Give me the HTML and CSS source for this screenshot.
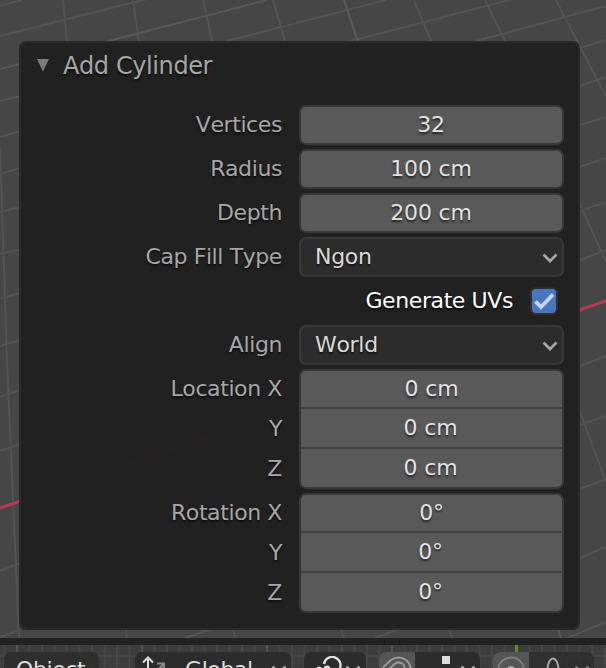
FILE: index.html
```html
<!DOCTYPE html>
<html lang="en">
<head>
<meta charset="utf-8">
<title>Add Cylinder</title>
<link rel="stylesheet" href="styles.css">
</head>
<body>
<div class="screen">
  <svg class="viewport-grid" width="606" height="668" viewBox="0 0 606 668">
    <rect width="606" height="638" fill="#464646"/>
    <g fill="none" stroke="#535353" stroke-width="2">
      <path d="M0 6 22 0M0 36 147-1M227 41 386 0M351 41 509 0M476 41 606 6"/>
      <path d="M0 101 20 96M0 137 20 131M0 174 20 168M0 212 20 207M0 254 20 249M0 299 20 293M0 346 20 340M0 397 20 390M0 451 20 444M0 571 20 563M0 637 20 630"/>
      <path d="M580 48 606 40M580 86 606 77M580 125 606 117M580 167 606 158M580 211 606 202M580 260 606 250M580 366 606 356M580 425 606 416M580 489 606 479M580 558 606 547M567 638 606 622M185 638 212 629M375 638 399 629"/>
      <path d="M63 0 67 41M133 0 139 41M203 0 212 41M273 0 285 41M414 0 431 41M485 0 505 41M556 0 606 97M580 204 606 262M580 412 606 482"/>
      <path d="M0 149 7 360 19 638M126 629 127 638M233 629 235 638M341 629 344 638M449 629 452 638"/>
    </g>
    <path d="M0 69 267 0M344 0 450 318 561 638" fill="none" stroke="#595959" stroke-width="2"/>
    <path d="M0 508 606 301" stroke="#b93a50" stroke-width="3"/>
    <rect y="638" width="606" height="7" fill="#222"/>
    <rect y="645" width="606" height="23" fill="#3d3d3d"/>
    <path d="M4.5 645v23M29.5 645v23M42 645v23M54.5 645v23M67 645v23M79.5 645v23M92 645v23M104.5 645v23M117 645v23M129.5 645v23M154.5 645v23M167 645v23M179.5 645v23M192 645v23M204.5 645v23M217 645v23M229.5 645v23M242 645v23M254.5 645v23M279.5 645v23M292 645v23M304.5 645v23M317 645v23M329.5 645v23M342 645v23M354.5 645v23M367 645v23M379.5 645v23M404.5 645v23M417 645v23M429.5 645v23M442 645v23M454.5 645v23M467 645v23M479.5 645v23M492 645v23M504.5 645v23M529.5 645v23M542 645v23M554.5 645v23M567 645v23M579.5 645v23M592 645v23M604.5 645v23M0 656h606" stroke="#464646" stroke-width="2"/>
    <path d="M17 645v23M142 645v23M267 645v23M392 645v23" stroke="#525252" stroke-width="2"/>
    <path d="M516.5 645v23" stroke="#5b9510" stroke-width="3"/>
  </svg>

  <section class="panel">
    <header class="panel-header">
      <svg width="12" height="13" viewBox="0 0 12 13"><path d="M0 0H12L6 12.5Z" fill="#7c7c7c"/></svg>
      <h1 class="title">Add Cylinder</h1>
    </header>
    <div class="row"><span class="label">Vertices</span><div class="field">32</div></div>
    <div class="row"><span class="label">Radius</span><div class="field">100 cm</div></div>
    <div class="row"><span class="label">Depth</span><div class="field">200 cm</div></div>
    <div class="row"><span class="label">Cap Fill Type</span><div class="field select"><span>Ngon</span><svg width="16" height="10" viewBox="0 0 16 10"><path d="M1.5 1.5 8 8 14.5 1.5"/></svg></div></div>
    <div class="row check-row"><span class="check-label">Generate UVs</span><span class="checkbox"><svg width="24" height="24" viewBox="0 0 24 24"><path d="M3.5 12.5 9 18 21 5.5"/></svg></span></div>
    <div class="row"><span class="label">Align</span><div class="field select"><span>World</span><svg width="16" height="10" viewBox="0 0 16 10"><path d="M1.5 1.5 8 8 14.5 1.5"/></svg></div></div>
    <div class="group">
      <div class="group-labels"><span>Location X</span><span>Y</span><span>Z</span></div>
      <div class="group-fields"><div>0 cm</div><div>0 cm</div><div>0 cm</div></div>
    </div>
    <div class="group">
      <div class="group-labels"><span>Rotation X</span><span>Y</span><span>Z</span></div>
      <div class="group-fields"><div>0°</div><div>0°</div><div>0°</div></div>
    </div>
  </section>

  <footer class="toolbar">
    <div class="tool object">Object</div>
    <div class="tool global">
      <svg width="32" height="22" viewBox="0 0 32 22" fill="none" stroke-width="2"><path d="M9 22V1.5M4 6.5 9 1.5 14 6.5" stroke="#ddd"/><path d="M18 7.5H25V14M25 7.5 17 16" stroke="#888"/></svg>
      <span>Global</span>
      <svg class="arrow" width="16" height="10" viewBox="0 0 16 10"><path d="M1.5 1.5 8 8 14.5 1.5"/></svg>
    </div>
    <div class="tool pivot">
      <svg width="32" height="18" viewBox="0 0 32 18" fill="none" stroke="#ddd" stroke-width="2.4"><path d="M14 8A8.3 8.3 0 1 1 29 14"/><circle cx="9" cy="13.5" r="3" fill="#ddd" stroke="none"/><circle cx="17" cy="13" r="3.5" fill="#ddd" stroke="none"/></svg>
      <svg class="arrow" width="16" height="10" viewBox="0 0 16 10"><path d="M1.5 1.5 8 8 14.5 1.5"/></svg>
    </div>
    <div class="tool snap">
      <div class="toggle"><svg width="36" height="16" viewBox="0 0 36 16" fill="none" stroke="#999" stroke-width="2"><path d="M4 11.5 12 4Q19.5-1 27 4Q32 8 32 16M10 13 15 8.5Q19.5 4.5 24 8Q26 10 26 16"/></svg></div>
      <i class="increment"></i>
      <svg class="arrow" width="16" height="10" viewBox="0 0 16 10"><path d="M1.5 1.5 8 8 14.5 1.5"/></svg>
    </div>
    <div class="tool proportional">
      <div class="toggle"><svg width="36" height="16" viewBox="0 0 36 16"><circle cx="18" cy="14.5" r="13" fill="none" stroke="#7d7d7d" stroke-width="2"/><circle cx="18" cy="14" r="4" fill="#aaa"/></svg></div>
      <svg class="falloff" width="16" height="16" viewBox="0 0 16 16"><path d="M2 16C3 4 6 2.5 8 2.5S13 4 14 16" fill="none" stroke="#aaa" stroke-width="2"/></svg>
      <svg class="arrow" width="16" height="10" viewBox="0 0 16 10"><path d="M1.5 1.5 8 8 14.5 1.5"/></svg>
    </div>
  </footer>
</div>
</body>
</html>
```

FILE: styles.css
```css
* { box-sizing: border-box; }
body { margin: 0; background: #464646; overflow: hidden; font-family: "DejaVu Sans", sans-serif; font-size: 22px; letter-spacing: -0.4px; font-kerning: none; }
.screen { position: relative; width: 606px; height: 668px; overflow: hidden; padding: 41px 0 0 19px; }
svg { display: block; flex: none; }
.viewport-grid { position: absolute; left: 0; top: 0; }
.panel {
  position: relative;
  width: 561px;
  height: 589px;
  border: 2px solid #292929;
  border-radius: 7px;
  background: rgba(31, 31, 31, .955);
  background-clip: padding-box;
  color: #a6a6a6;
  text-shadow: 0 2px 2px rgba(0, 0, 0, .6);
  padding: 0 14px;
}
.panel-header { display: flex; height: 62px; padding: 16px 0 0 2px; gap: 14px; }
.title { margin: -7px 0 0; font-size: 24px; line-height: 28px; font-weight: normal; }
.row { display: flex; height: 40px; margin-bottom: 4px; justify-content: flex-end; }
.label { padding-right: 17px; line-height: 40px; }
.field, .group-fields {
  width: 265px;
  border: 2px solid #383838;
  border-radius: 7px;
  background: #595959;
  color: #e2e2e2;
  text-align: center;
  line-height: 36px;
  letter-spacing: -0.15px;
  padding-right: 1px;
}
.select { display: flex; align-items: center; justify-content: space-between; background: #2c2c2c; color: #d9d9d9; padding: 0 4px 0 14px; letter-spacing: -0.3px; }
.select span { height: 36px; line-height: 36px; }
.select svg { margin-top: 2px; }
.select path, .arrow path { fill: none; stroke: #a6a6a6; stroke-width: 2.7; }
.check-row { align-items: center; padding-right: 6px; gap: 17px; }
.check-label { color: #fff; height: 40px; line-height: 40px; }
.checkbox { width: 28px; height: 28px; border: 2px solid #303030; border-radius: 6px; background: #4977bc; }
.checkbox path { fill: none; stroke: #c5d6ee; stroke-width: 3.8; }
.group { display: flex; height: 120px; margin-bottom: 4px; justify-content: flex-end; }
.group-labels { display: flex; flex-direction: column; text-align: right; padding-right: 17px; line-height: 40px; }
.group-labels span { height: 40px; }
.group-fields { display: grid; grid-template-rows: 36px 40px 40px; padding: 0; }
.group-fields div + div { border-top: 2px solid #414141; line-height: 38px; padding-right: 2px; }
.toolbar { position: relative; display: flex; margin: 22px 0 0 -15px; height: 40px; color: #dedede; line-height: 36px; }
.tool { display: flex; flex: none; height: 40px; border-radius: 7px; background: #2c2c2c; overflow: hidden; }
.object { width: 95px; padding-left: 12px; background: rgba(44, 44, 44, .9); margin-right: 36px; }
.global { width: 156px; padding: 4px 0 0 4px; gap: 14px; margin-right: 13px; line-height: 28px; }
.global span { width: 70px; }
.global .arrow { margin: 9px 0 0 2px; }
.pivot { width: 62px; padding: 4px 0 0 6px; gap: 3px; margin-right: 13px; }
.pivot .arrow { margin-top: 9px; }
.snap { width: 101px; margin-right: 13px; }
.toggle { width: 36px; background: #555; }
.increment { width: 8px; height: 8px; margin: 4px 10px 0 27px; background: #ddd; }
.snap .arrow { margin: 13px 0 0; }
.proportional { width: 101px; background: rgba(44, 44, 44, .75); }
.toggle svg { margin-top: 4px; }
.falloff { margin: 4px 13px 0 16px; }
.proportional .arrow { margin-top: 13px; opacity: .6; }
```
